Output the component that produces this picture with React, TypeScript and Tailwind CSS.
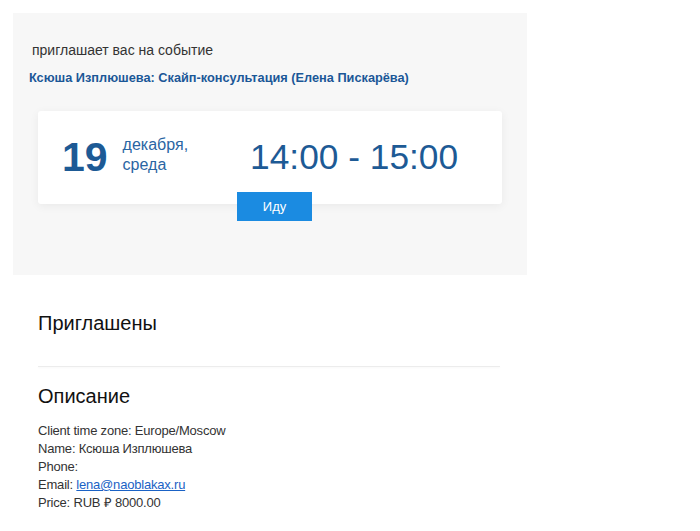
export default function App() {
  const sans = { fontFamily: '"Liberation Sans", Arial, sans-serif' };

  return (
    <div className="min-h-[531px] bg-white pt-[13px] pl-[13px]" style={sans}>
      {/* invitation block */}
      <div className="w-[514px] bg-[#f7f7f7] pt-[29px] pb-[54px]">
        <p className="pl-[19px] text-[14px] leading-[16px] text-[#333]">приглашает вас на событие</p>
        <p className="mt-[12px] pl-[16px] text-[12.75px] font-bold leading-[16px] text-[#1b5797]">
          Ксюша Изплюшева: Скайп-консультация (Елена Пискарёва)
        </p>

        <div className="mx-[25px] mt-[25px] flex h-[93px] items-center rounded-[3px] bg-white pl-[24px] shadow-[0_2px_10px_rgba(0,0,0,0.06)]">
          <span className="text-[41px] font-bold leading-none text-[#1d5a95]">19</span>
          <div className="ml-[15px] -mt-[6px] text-[16px] leading-[20px] text-[#2a65a3]">
            <div>декабря,</div>
            <div>среда</div>
          </div>
          <span className="ml-[62px] -mt-[2px] text-[35.3px] leading-none text-[#1d5a95]">14:00 - 15:00</span>
        </div>

        <div className="-mt-[12px] flex justify-center pl-[9px]">
          <button className="relative h-[29px] w-[75px] bg-[#1b8be1] text-[13px] text-white">Иду</button>
        </div>
      </div>

      {/* details */}
      <div className="w-[487px] pl-[25px]">
        <h2 className="mt-[36px] text-[20px] leading-[24px] text-[#111]">Приглашены</h2>
        <div className="mt-[31px] h-px bg-[#ececec] shadow-[0_1px_2px_rgba(0,0,0,0.04)]" />
        <h2 className="mt-[17px] text-[20px] leading-[24px] text-[#111]">Описание</h2>
        <div className="mt-[14px] text-[13px] leading-[18px] tracking-[-0.2px] text-[#333]">
          <div>Client time zone: Europe/Moscow</div>
          <div>Name: Ксюша Изплюшева</div>
          <div>Phone:</div>
          <div>
            Email: <a href="#" className="text-[#1a62c5] underline">lena@naoblakax.ru</a>
          </div>
          <div>Price: RUB ₽ 8000.00</div>
        </div>
      </div>
    </div>
  );
}
